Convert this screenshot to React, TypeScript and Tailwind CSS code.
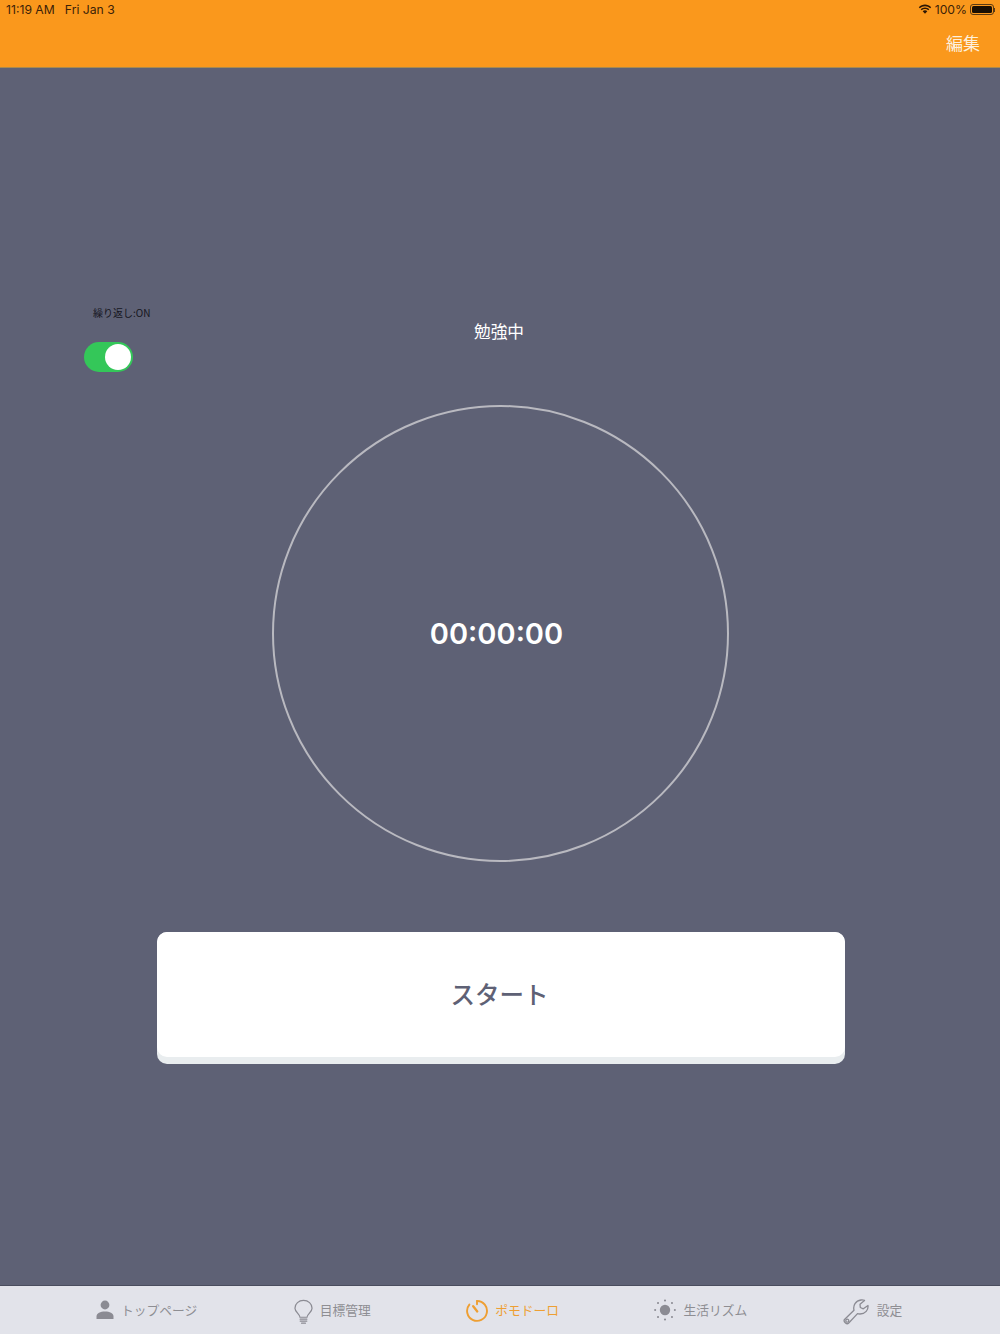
const jp = "font-['Noto_Sans_CJK_JP',sans-serif]";

function Person() {
  return (
    <svg width="20" height="20" viewBox="0 0 20 20" fill="#8b8b93">
      <circle cx="10" cy="5" r="4.400" />
      <path d="M1.500 19v-2.600c0-3.200 3.800-5 8.500-5s8.500 1.800 8.500 5V19z" />
    </svg>
  );
}
function Bulb() {
  return (
    <svg className="ml-[1px] mt-[4px]" width="19" height="27" viewBox="0 0 20 27" fill="none" stroke="#8b8b93" strokeWidth="1.300" strokeLinecap="round">
      <path d="M6.300 18.500c0-3-5.300-5.500-5.300-9.600A9 8.200 0 0 1 19 8.900c0 4.100-5.300 6.600-5.300 9.600z" />
      <path d="M6.500 20.500h7M6.500 22.500h7M8 24.700h4" />
    </svg>
  );
}
function TimerIcon() {
  return (
    <svg width="22" height="23" viewBox="0 0 23 24" fill="none" stroke="#ee9f33" strokeWidth="2" strokeLinecap="round">
      <path d="M11.500 2a10.400 10.400 0 1 1-8 3.800" />
      <path d="M11.500 2v3.500" />
      <path d="M7.500 7.500l4.300 5.500" strokeWidth="2.400" />
    </svg>
  );
}
function Sun() {
  return (
    <svg width="22" height="22" viewBox="0 0 23 23" fill="#8b8b93">
      <circle cx="11.500" cy="11.500" r="5.400" />
      <circle cx="11.500" cy="1.500" r="1.100" />
      <circle cx="11.500" cy="21.500" r="1.100" />
      <circle cx="1.200" cy="11.500" r="1.100" />
      <circle cx="21.800" cy="11.500" r="1.100" />
      <circle cx="4.200" cy="4.200" r="1.100" />
      <circle cx="18.800" cy="4.200" r="1.100" />
      <circle cx="4.200" cy="18.800" r="1.100" />
      <circle cx="18.800" cy="18.800" r="1.100" />
    </svg>
  );
}
function Wrench() {
  return (
    <svg className="mt-[4px]" width="26" height="26" viewBox="0 0 26 26" fill="none" stroke="#8b8b93" strokeWidth="1.300" strokeLinejoin="round">
      <path d="M1.500 20.500L11 11.200C9.800 6.500 12.500 1.800 18 1c1.300-.2 2.500 0 3.500.4L17 5.200l.3 3.300 3 1.300L25 6.500c.4 4.500-2.500 8.500-8 8.500-1 0-1.800-.1-2.500-.4L5.500 24.300c-1.800 1.600-5.500-1.800-4-3.800z" />
      <circle cx="4.300" cy="21.700" r="1.500" />
    </svg>
  );
}

const tabs = [
  { label: "トップページ", icon: <Person />, gap: "gap-[6px]", color: "text-[#8e8e93]" },
  { label: "目標管理", icon: <Bulb />, gap: "gap-[7px]", color: "text-[#8e8e93]" },
  { label: "ポモドーロ", icon: <TimerIcon />, gap: "gap-[7px]", color: "text-[#ee9f33]" },
  { label: "生活リズム", icon: <Sun />, gap: "-ml-[1px] gap-[8px]", color: "text-[#8e8e93]" },
  { label: "設定", icon: <Wrench />, gap: "gap-[8px]", color: "text-[#8e8e93]" },
];

export default function App() {
  return (
    <div className={`flex h-[1334px] w-[1000px] flex-col overflow-hidden bg-[#5e6175] ${jp}`}>
      <header className="flex h-[68px] flex-col border-b border-[#a98a4e] bg-[#fa981c]">
        <div className="flex h-[20px] items-center justify-between pl-[6px] pr-[5px] font-['Inter',sans-serif] text-[12.200px] text-[#3c2208]">
          <div className="flex gap-[10px]">
            <span>11:19 AM</span>
            <span>Fri Jan 3</span>
          </div>
          <div className="flex items-center gap-[3px]">
            <svg width="14" height="11" viewBox="0 0 14 11" fill="#2c1705">
              <path d="M7 2.200c2 0 3.800.8 5.200 2.100l1-1.100C11.500 1.500 9.400.6 7 .6S2.500 1.500.8 3.200l1 1.100C3.200 3 5 2.200 7 2.200z" />
              <path d="M7 5c1.300 0 2.400.5 3.300 1.300l1-1.100C10.100 4.100 8.600 3.400 7 3.400s-3.100.7-4.300 1.800l1 1.100C4.600 5.500 5.700 5 7 5z" />
              <path d="M7 6.300c-.9 0-1.700.3-2.300.9L7 9.800l2.300-2.600c-.6-.6-1.400-.9-2.300-.9z" />
            </svg>
            <span>100%</span>
            <div className="flex items-center">
              <div className="flex h-[11px] w-[24px] items-center rounded-[3px] border border-[#5b3a12] p-[1px]">
                <div className="h-full w-full rounded-[1.500px] bg-[#1a0f03]" />
              </div>
              <div className="h-[4px] w-[1px] bg-[#5b3a12]" />
            </div>
          </div>
        </div>
        <div className="flex justify-end pr-[20px] pt-[10px] text-[17px] leading-[25px] text-[#fdf0dc]">編集</div>
      </header>

      <main className="flex flex-1 flex-col items-center pt-[238px]">
        <div className="grid h-[66px] w-full grid-cols-[1fr_auto_1fr]">
          <div className="flex flex-col items-start pl-[84px]">
            <span className="ml-[9px] text-[10px] leading-[14px] text-[#15151d]">繰り返し:ON</span>
            <div className="mt-[22px] flex h-[30px] w-[49px] items-center justify-end rounded-full bg-[#34c759] p-[2px]">
              <div className="h-[26px] w-[26px] rounded-full bg-white" />
            </div>
          </div>
          <div className="pr-[2px] pt-[13px] text-[16.700px] leading-[24px] text-white">勉強中</div>
          <div />
        </div>

        <div className="mt-[33px] flex h-[457px] w-[457px] items-center justify-center rounded-full border-2 border-[#b9b9c0]">
          <span className="mr-[7px] font-['Inter',sans-serif] text-[29px] font-semibold text-white">00:00:00</span>
        </div>

        <div className="ml-[2px] mt-[70px] w-[688px] rounded-[10px] bg-[#e9edef] pb-[7px]">
          <div className="flex h-[125px] items-center justify-center rounded-[10px] bg-white pb-[1px] pr-[3px] text-[24.500px] font-medium text-[#5e6175]">
            スタート
          </div>
        </div>
      </main>

      <nav className="flex h-[49px] items-center gap-[95.500px] border-t border-[#4a4d5e] bg-[#e2e3ea] pl-[95px]">
        {tabs.map((t) => (
          <div key={t.label} className={`flex items-center ${t.gap}`}>
            {t.icon}
            <span className={`text-[12.750px] leading-[16px] ${t.color}`}>{t.label}</span>
          </div>
        ))}
      </nav>
    </div>
  );
}
